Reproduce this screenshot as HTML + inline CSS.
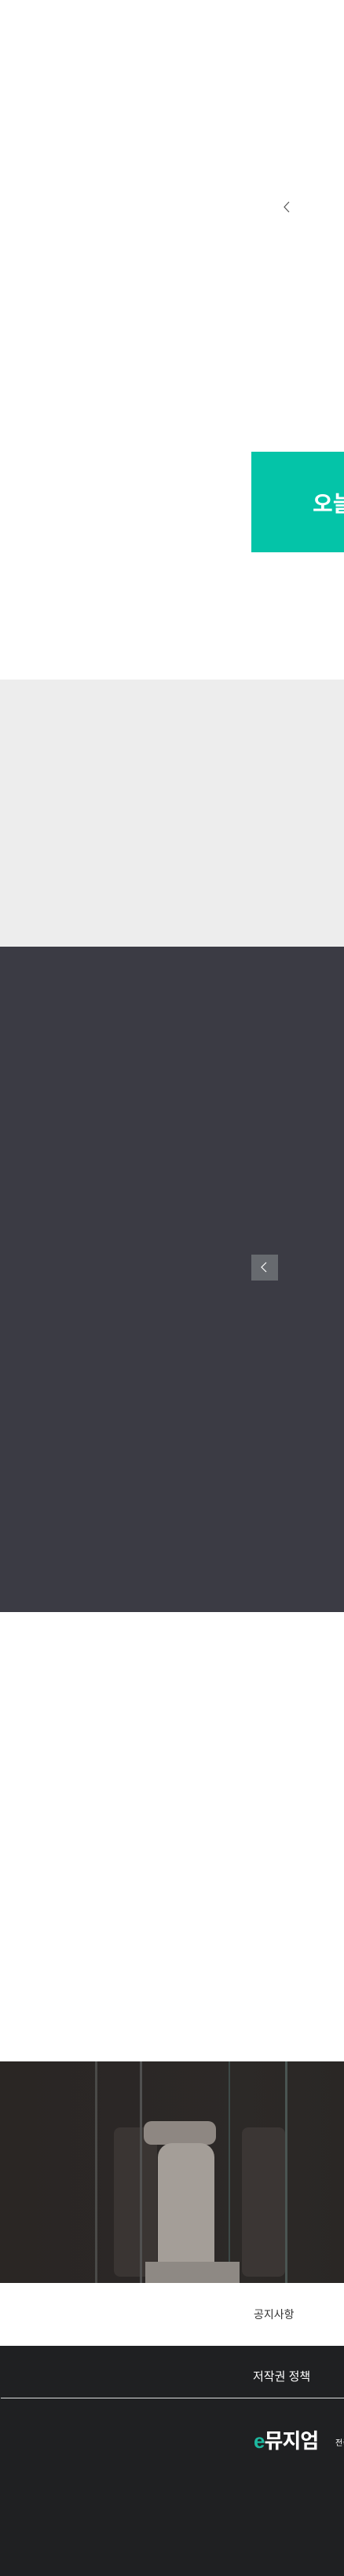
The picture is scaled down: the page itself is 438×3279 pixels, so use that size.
<!DOCTYPE html>
<html><head><meta charset="utf-8"><style>
*{margin:0;padding:0;box-sizing:border-box}
body{width:438px;height:3279px;background:#fff;position:relative;overflow:hidden;font-family:"Liberation Sans","Noto Sans CJK KR",sans-serif}
.a{position:absolute}
</style></head><body>
<svg class="a" style="left:359px;top:255px" width="12" height="18" viewBox="0 0 12 18"><path d="M9 2 L3 8.5 L9 15" fill="none" stroke="#555" stroke-width="1.2"/></svg>
<div class="a" style="left:320px;top:575px;width:118px;height:128px;background:#04c4a8"></div>
<div class="a" style="left:398px;top:620px;color:#fff;font-size:28px;font-weight:bold;white-space:nowrap">오늘</div>
<div class="a" style="left:0;top:865px;width:438px;height:340px;background:#ededed"></div>
<div class="a" style="left:0;top:1205px;width:438px;height:847px;background:#3b3b44"></div>
<div class="a" style="left:320px;top:1597px;width:34px;height:33px;background:#676a6f"></div>
<svg class="a" style="left:330px;top:1605px" width="12" height="16" viewBox="0 0 12 16"><path d="M9 2 L3 8 L9 14" fill="none" stroke="#fff" stroke-width="1.2"/></svg>
<div class="a" style="left:0;top:2624px;width:438px;height:282px;background:linear-gradient(90deg,#2a2624,#2b2726 40%,#2c2927 70%,#2a2725);overflow:hidden">
 <div class="a" style="left:145px;top:84px;width:55px;height:190px;background:#3a3533;border-radius:8px"></div>
 <div class="a" style="left:308px;top:84px;width:55px;height:190px;background:#3b3634;border-radius:8px"></div>
 <div class="a" style="left:121px;top:0;width:3px;height:282px;background:#4a4a48"></div>
 <div class="a" style="left:178px;top:0;width:3px;height:282px;background:#505050"></div>
 <div class="a" style="left:291px;top:0;width:2px;height:282px;background:#3e4a48"></div>
 <div class="a" style="left:363px;top:0;width:3px;height:282px;background:#4a5552"></div>
 <div class="a" style="left:183px;top:76px;width:92px;height:30px;background:#8e8782;border-radius:10px"></div>
 <div class="a" style="left:201px;top:104px;width:72px;height:160px;background:#a49e98;border-radius:18px 18px 4px 4px"></div>
 <div class="a" style="left:185px;top:255px;width:120px;height:27px;background:#8e8984"></div>
</div>
<div class="a" style="left:323px;top:2936px;font-size:14px;color:#333">공지사항</div>
<div class="a" style="left:0;top:2986px;width:438px;height:293px;background:#1f2022"></div>
<div class="a" style="left:322px;top:3014px;font-size:15px;color:#fff">저작권 정책</div>
<div class="a" style="left:1px;top:3052px;width:437px;height:1px;background:#ddd"></div>
<div class="a" style="left:323px;top:3092px;font-size:26px;font-weight:bold;color:#fff;white-space:nowrap;letter-spacing:-1px;line-height:30px"><span style="color:#1db89f">e</span>뮤지엄</div>
<div class="a" style="left:427px;top:3101px;font-size:10px;color:#fff;white-space:nowrap">전국</div>
</body></html>
